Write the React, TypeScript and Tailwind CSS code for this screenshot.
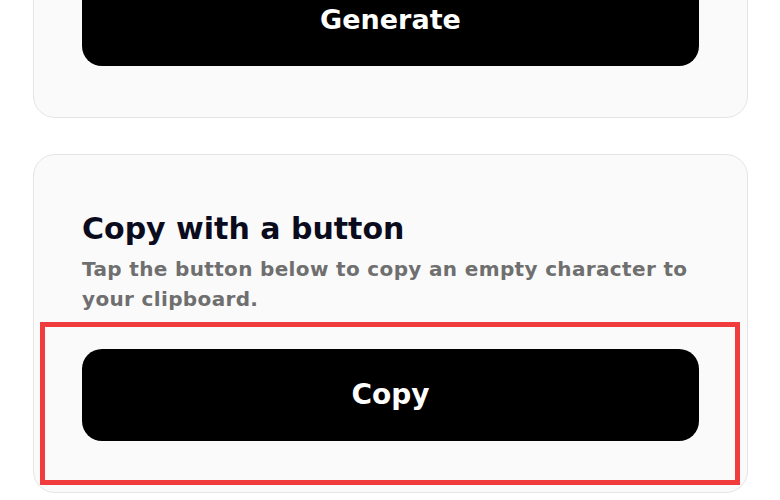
export default function App() {
  return (
    <div className="h-[500px] overflow-hidden bg-white font-['DejaVu_Sans',sans-serif]">
      <div className="-mt-[80px] flex flex-col gap-[36px] pl-[33px] pr-[32px]">
        {/* previous card, mostly scrolled away */}
        <div className="rounded-[22px] border border-[#e5e5e5] bg-[#fafafa] px-12 pt-[53px] pb-[51px]">
          <button
            type="button"
            className="flex h-[92px] w-full items-center justify-center rounded-[20px] bg-black text-[27px] font-bold text-white"
          >
            Generate
          </button>
        </div>

        <div className="relative rounded-[22px] border border-[#e5e5e5] bg-[#fafafa] px-12 pt-[55px] pb-[51px]">
          <h2 className="text-[30px] font-bold leading-[38px] text-[#0b0b1e]">
            Copy with a button
          </h2>
          <p className="mt-[6px] text-[20px] font-bold leading-[30px] tracking-[0.35px] text-[#6f6f6f]">
            Tap the button below to copy an empty character to your clipboard.
          </p>
          <button
            type="button"
            className="mt-[35px] flex h-[92px] w-full items-center justify-center rounded-[20px] bg-black text-[28px] font-bold text-white"
          >
            Copy
          </button>

          {/* highlight around the copy button */}
          <div className="pointer-events-none absolute left-[6px] top-[167px] h-[163px] w-[700px] border-[5px] border-[#f03c3c]" />
        </div>
      </div>
    </div>
  );
}
